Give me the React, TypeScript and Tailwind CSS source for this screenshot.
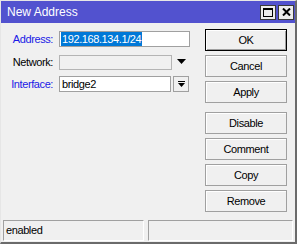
import React from 'react'

const font = { fontFamily: '"Liberation Sans", Arial, sans-serif' }

function Btn({ label, primary }: { label: string; primary?: boolean }) {
  return (
    <button
      className={
        primary
          ? 'h-[22px] w-[82px] border border-black bg-[#f0f0f0] text-[11px] tracking-[-0.4px] text-black shadow-[inset_1px_1px_0_#ffffff,inset_-1px_-1px_0_#a0a0a0]'
          : 'h-[22px] w-[82px] border border-[#a0a0a0] bg-[#f0f0f0] text-[11px] tracking-[-0.4px] text-black shadow-[inset_1px_1px_0_#ffffff]'
      }
    >
      {label}
    </button>
  )
}

function Row({ label, blue, children }: { label: string; blue?: boolean; children: React.ReactNode }) {
  return (
    <div className="flex h-[16px] items-center">
      <div
        className={
          'w-[52px] text-right text-[11px] tracking-[-0.4px] ' + (blue ? 'text-[#1a1ae6]' : 'text-black')
        }
      >
        {label}
      </div>
      <div className="ml-[6px] flex h-full items-center">{children}</div>
    </div>
  )
}

export default function App() {
  return (
    <div
      className="flex h-[244px] w-[297px] flex-col border-l border-t border-l-[#e6e6e6] border-t-[#e6e6e6] border-r-2 border-b-2 border-r-[#6b6b6b] border-b-[#6b6b6b] bg-[#f0f0f0]"
      style={font}
    >
      {/* title bar */}
      <div className="flex h-[22px] items-center bg-[#5252cf] pl-[6px] pr-[1px]">
        <span className="flex-1 text-[12px] text-white">New Address</span>
        <div className="flex gap-[2px]">
          <div className="flex h-[15px] w-[16px] items-center justify-center border border-[#3a3a3a] bg-[#ececec]">
            <div className="h-[9px] w-[10px] border border-t-2 border-black" />
          </div>
          <div className="flex h-[15px] w-[16px] items-center justify-center border border-[#3a3a3a] bg-[#ececec]">
            <svg width="9" height="8" viewBox="0 0 9 8">
              <path d="M1 0.5 L8 7.5 M8 0.5 L1 7.5" stroke="#000" strokeWidth="2" />
            </svg>
          </div>
        </div>
      </div>

      {/* body */}
      <div className="flex flex-1">
        <div className="w-[204px] pt-[8px]">
          <Row label="Address:" blue>
            <div className="flex h-[16px] w-[131px] items-center border border-[#a0a0a0] bg-white px-[1px]">
              <span className="bg-[#0078d7] px-[1px] text-[11px] leading-[14px] tracking-[-0.4px] text-white">
                192.168.134.1/24
              </span>
            </div>
          </Row>
          <div className="mt-[7px]">
            <Row label="Network:">
              <div className="h-[15px] w-[113px] border border-[#b4b4b4] bg-[#f0f0f0]" />
              <svg className="ml-[5px]" width="9" height="6" viewBox="0 0 9 6">
                <path d="M0 0 H9 L4.5 5 Z" fill="#000" />
              </svg>
            </Row>
          </div>
          <div className="mt-[6px]">
            <Row label="Interface:" blue>
              <div className="flex h-[16px] w-[112px] items-center border border-[#a0a0a0] bg-white pl-[2px] text-[11px] tracking-[-0.4px] text-black">
                bridge2
              </div>
              <div className="ml-[2px] flex h-[16px] w-[16px] items-center justify-center border border-[#a0a0a0] bg-[#f0f0f0]">
                <svg width="7" height="7" viewBox="0 0 7 7">
                  <path d="M0 0.5 H7" stroke="#000" strokeWidth="1" />
                  <path d="M0 2 H7 L3.5 6 Z" fill="#000" />
                </svg>
              </div>
            </Row>
          </div>
        </div>

        <div className="flex flex-col pt-[6px]">
          <div className="flex flex-col gap-[4px]">
            <Btn label="OK" primary />
            <Btn label="Cancel" />
            <Btn label="Apply" />
          </div>
          <div className="mt-[9px] flex flex-col gap-[4px]">
            <Btn label="Disable" />
            <Btn label="Comment" />
            <Btn label="Copy" />
            <Btn label="Remove" />
          </div>
        </div>
      </div>

      {/* status bar */}
      <div className="flex h-[22px] gap-[4px] px-[2px] pb-[1px]">
        <div className="flex w-[141px] items-center border border-l-[#a0a0a0] border-t-[#a0a0a0] border-r-white border-b-white pl-[2px] text-[11px] tracking-[-0.4px] text-black">
          enabled
        </div>
        <div className="flex-1 border border-l-[#a0a0a0] border-t-[#a0a0a0] border-r-white border-b-white" />
      </div>
    </div>
  )
}
